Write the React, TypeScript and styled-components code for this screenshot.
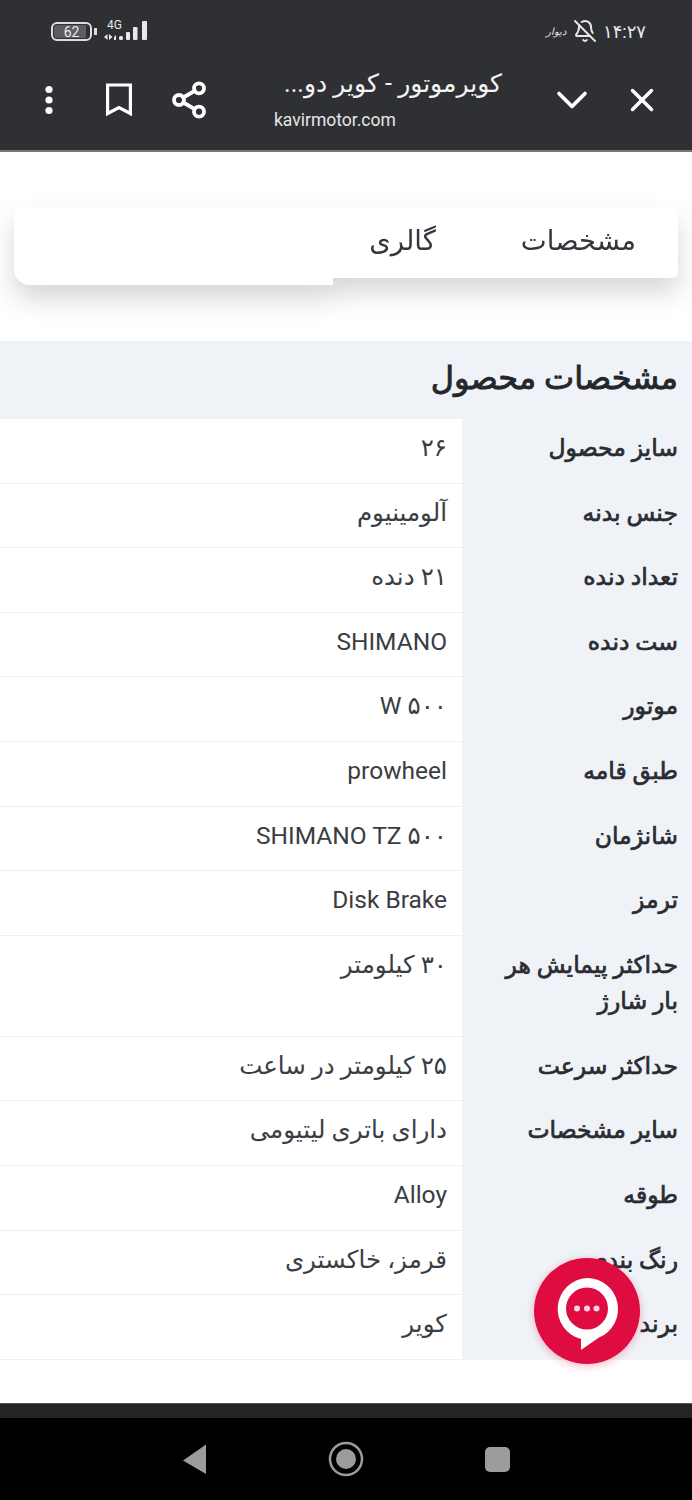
import React from "react";
import styled, { createGlobalStyle } from "styled-components";
import { BellOff, ChevronDown, Share2, X } from "lucide-react";

const GlobalStyle = createGlobalStyle`
  html, body {
    margin: 0;
    padding: 0;
    background: #fff;
  }
  body {
    font-family: Roboto, "DejaVu Sans", "Noto Sans", sans-serif;
  }
  * {
    box-sizing: border-box;
  }
`;

const Page = styled.div`
  position: relative;
  width: 692px;
  height: 1500px;
  overflow: hidden;
  display: flex;
  flex-direction: column;
  background: #fff;
`;

const Header = styled.header`
  height: 152px;
  flex-shrink: 0;
  background: #2f3033;
  border-bottom: 2px solid #77787a;
  color: #fff;
`;

const StatusBar = styled.div`
  height: 62px;
  display: flex;
  align-items: center;
  justify-content: space-between;
  padding: 0 46px 0 51px;
  color: #e8e8e8;
`;

const StatusGroup = styled.div<{ $gap: number }>`
  display: flex;
  align-items: center;
  gap: ${(props) => props.$gap}px;
`;

const Battery = styled.div`
  position: relative;
  width: 41px;
  height: 19px;
  border: 2px solid #ddd;
  border-radius: 6px;
  font-size: 14px;
  line-height: 15px;
  text-align: center;
  background: linear-gradient(90deg, #5c5d60 0 90%, transparent 90%);
  background-clip: content-box;
  padding: 1px;

  &::after {
    content: "";
    position: absolute;
    right: -7px;
    top: 4px;
    width: 3px;
    height: 7px;
    background: #ddd;
  }
`;

const Network = styled.div`
  margin-left: 4px;
  position: relative;
  width: 44px;
  height: 21px;
`;

const NetworkLabel = styled.span`
  position: absolute;
  left: 3px;
  top: -2px;
  font-size: 12px;
  line-height: 12px;
`;

const CarrierName = styled.span`
  font-size: 10px;
  font-style: italic;
  direction: rtl;
  margin-right: 1px;
`;

const Clock = styled.span`
  font-size: 18px;
  direction: rtl;
`;

const Toolbar = styled.div`
  height: 88px;
  display: flex;
  align-items: center;
  padding: 0 15px 12px 14px;
`;

const ToolButton = styled.div`
  width: 70px;
  height: 70px;
  flex-shrink: 0;
  display: flex;
  align-items: center;
  justify-content: center;
`;

const TitleBlock = styled.div`
  flex: 1;
  padding: 0 35px 0 50px;
  display: flex;
  flex-direction: column;
  gap: 10px;
  margin-top: -3px;
`;

const PageTitle = styled.div`
  direction: rtl;
  font-size: 25px;
  line-height: 32px;
  white-space: nowrap;
  color: #f4f4f4;
`;

const PageHost = styled.div`
  font-size: 17.5px;
  line-height: 20px;
  color: #e6e6e6;
`;

const TabsCard = styled.div`
  direction: rtl;
  margin: 55px 14px 0;
  display: grid;
  grid-template-columns: 345px 1fr;
  align-items: start;
  filter: drop-shadow(0 14px 13px rgba(0, 0, 0, 0.16));
`;

const TabList = styled.div`
  height: 71px;
  display: flex;
  align-items: center;
  gap: 85px;
  padding: 0 42px 4px 0;
  background: #fff;
  border-top-right-radius: 8px;
  border-bottom-right-radius: 6px;
`;

const Tab = styled.div`
  font-size: 27.5px;
  color: #33363c;
`;

const TabFill = styled.div`
  height: 78px;
  background: #fff;
  border-top-left-radius: 8px;
  border-bottom-left-radius: 16px;
`;

const Specs = styled.section`
  direction: rtl;
  margin-top: 56px;
  background: #eff3f7;
`;

const SpecsTitle = styled.h2`
  margin: 0;
  height: 78px;
  padding: 0 14px 4px;
  display: flex;
  align-items: center;
  font-size: 32px;
  font-weight: 400;
  -webkit-text-stroke: 0.9px #24262b;
  color: #24262b;
`;

const SpecRow = styled.div<{ $tall?: boolean }>`
  display: grid;
  grid-template-columns: 230px 1fr;
  min-height: ${(props) => (props.$tall ? "101px" : "64.6px")};
`;

const SpecLabel = styled.div`
  padding: 11px 14px 0 24px;
  font-size: 23.5px;
  line-height: 36px;
  -webkit-text-stroke: 0.7px #2a2c31;
  color: #2a2c31;
`;

const SpecValue = styled.div`
  padding: 11px 15px 0 0;
  font-size: 24.5px;
  line-height: 36px;
  color: #3a3d43;
  background: #fff;
  border-bottom: 1px solid #efefef;
`;

const ChatButton = styled.div`
  position: absolute;
  left: 534px;
  top: 1258px;
  width: 106px;
  height: 106px;
  border-radius: 50%;
  background: #de0c40;
  box-shadow: 0 2px 8px rgba(224, 16, 63, 0.3);
`;

const BottomArea = styled.div`
  margin-top: auto;
  flex-shrink: 0;
`;

const BrowserStrip = styled.div`
  height: 15px;
  background: #242424;
  border-top: 1px solid #555;
`;

const NavBar = styled.nav`
  height: 82px;
  background: #000;
  display: flex;
  align-items: center;
  padding: 0 0 0 182px;
`;

const NavSlot = styled.div<{ $gap: number }>`
  margin-right: ${(props) => props.$gap}px;
  display: flex;
`;

const NavSquare = styled.div`
  width: 25px;
  height: 25px;
  border-radius: 5px;
  background: #9c9c9c;
`;

const specs = [
  { label: "سایز محصول", value: "۲۶" },
  { label: "جنس بدنه", value: "آلومینیوم" },
  { label: "تعداد دنده", value: "۲۱ دنده" },
  { label: "ست دنده", value: "SHIMANO" },
  { label: "موتور", value: "W ۵۰۰" },
  { label: "طبق قامه", value: "prowheel" },
  { label: "شانژمان", value: "SHIMANO TZ ۵۰۰" },
  { label: "ترمز", value: "Disk Brake" },
  { label: "حداکثر پیمایش هر بار شارژ", value: "۳۰ کیلومتر", tall: true },
  { label: "حداکثر سرعت", value: "۲۵ کیلومتر در ساعت" },
  { label: "سایر مشخصات", value: "دارای باتری لیتیومی" },
  { label: "طوقه", value: "Alloy" },
  { label: "رنگ بندی", value: "قرمز، خاکستری" },
  { label: "برند", value: "کویر" },
];

const SignalIcon = () => (
  <svg width="44" height="21" viewBox="0 0 44 21" fill="#e8e8e8">
    <path d="M0 16l3.500-3v6zM5 13l3.500 3-3.500 3zM12 14v5h-2v-3z" />
    <rect x="15" y="15" width="4" height="4" rx="1.500" />
    <rect x="22" y="11" width="4" height="8" rx="1" />
    <rect x="29" y="6" width="4.500" height="13" rx="1" />
    <rect x="38" y="0" width="5" height="19" rx="1" />
  </svg>
);

const DotsIcon = () => (
  <svg width="14" height="30" viewBox="0 0 14 30" fill="#fff">
    <circle cx="7" cy="4.500" r="3.600" />
    <circle cx="7" cy="15" r="3.600" />
    <circle cx="7" cy="25.500" r="3.600" />
  </svg>
);

const BookmarkIcon = () => (
  <svg width="28" height="34" viewBox="0 0 28 34" fill="none" stroke="#fff" strokeWidth="3.200">
    <path d="M2.600 2h22.800v28.500L14 24.500 2.600 30.500z" />
  </svg>
);

const ChatIcon = () => (
  <svg width="106" height="106" viewBox="0 0 106 106">
    <path
      fillRule="evenodd"
      fill="#fff"
      d="M53 20a31 31 0 0 1 12 59.600L47 92V81A31 31 0 0 1 53 20zM53 29.500a21 21 0 1 0 0 42a21 21 0 0 0 0-42z"
    />
    <circle cx="43" cy="50.500" r="3" fill="#fbd5de" />
    <circle cx="53" cy="50.500" r="3" fill="#fbd5de" />
    <circle cx="62.500" cy="50.500" r="3" fill="#fbd5de" />
  </svg>
);

const BackIcon = () => (
  <svg width="26" height="32" viewBox="0 0 26 32">
    <path d="M24 1.500V31L1 17.500z" fill="#9c9c9c" />
  </svg>
);

const HomeIcon = () => (
  <svg width="36" height="36" viewBox="0 0 36 36">
    <circle cx="18" cy="18" r="16" fill="none" stroke="#9c9c9c" strokeWidth="2.500" />
    <circle cx="18" cy="18" r="10" fill="#9c9c9c" />
  </svg>
);

const App: React.FC = () => {
  return (
    <>
      <GlobalStyle />
      <Page>
        <Header>
          <StatusBar>
            <StatusGroup $gap={8}>
              <Battery>62</Battery>
              <Network>
                <NetworkLabel>4G</NetworkLabel>
                <SignalIcon />
              </Network>
            </StatusGroup>
            <StatusGroup $gap={6}>
              <CarrierName>دیوار</CarrierName>
              <BellOff size={24} strokeWidth={2} />
              <Clock>۱۴:۲۷</Clock>
            </StatusGroup>
          </StatusBar>
          <Toolbar>
            <ToolButton>
              <DotsIcon />
            </ToolButton>
            <ToolButton>
              <BookmarkIcon />
            </ToolButton>
            <ToolButton>
              <Share2 size={40} strokeWidth={2.3} />
            </ToolButton>
            <TitleBlock>
              <PageTitle>کویرموتور - کویر دو...</PageTitle>
              <PageHost>kavirmotor.com</PageHost>
            </TitleBlock>
            <ToolButton>
              <ChevronDown size={52} strokeWidth={1.7} />
            </ToolButton>
            <ToolButton>
              <X size={38} strokeWidth={2.2} />
            </ToolButton>
          </Toolbar>
        </Header>

        <TabsCard>
          <TabList>
            <Tab>مشخصات</Tab>
            <Tab>گالری</Tab>
          </TabList>
          <TabFill />
        </TabsCard>

        <Specs>
          <SpecsTitle>مشخصات محصول</SpecsTitle>
          {specs.map((spec) => (
            <SpecRow key={spec.label} $tall={spec.tall}>
              <SpecLabel>{spec.label}</SpecLabel>
              <SpecValue>{spec.value}</SpecValue>
            </SpecRow>
          ))}
        </Specs>

        <BottomArea>
          <BrowserStrip />
          <NavBar>
            <NavSlot $gap={120}>
              <BackIcon />
            </NavSlot>
            <NavSlot $gap={121}>
              <HomeIcon />
            </NavSlot>
            <NavSquare />
          </NavBar>
        </BottomArea>

        <ChatButton>
          <ChatIcon />
        </ChatButton>
      </Page>
    </>
  );
};

export default App;
